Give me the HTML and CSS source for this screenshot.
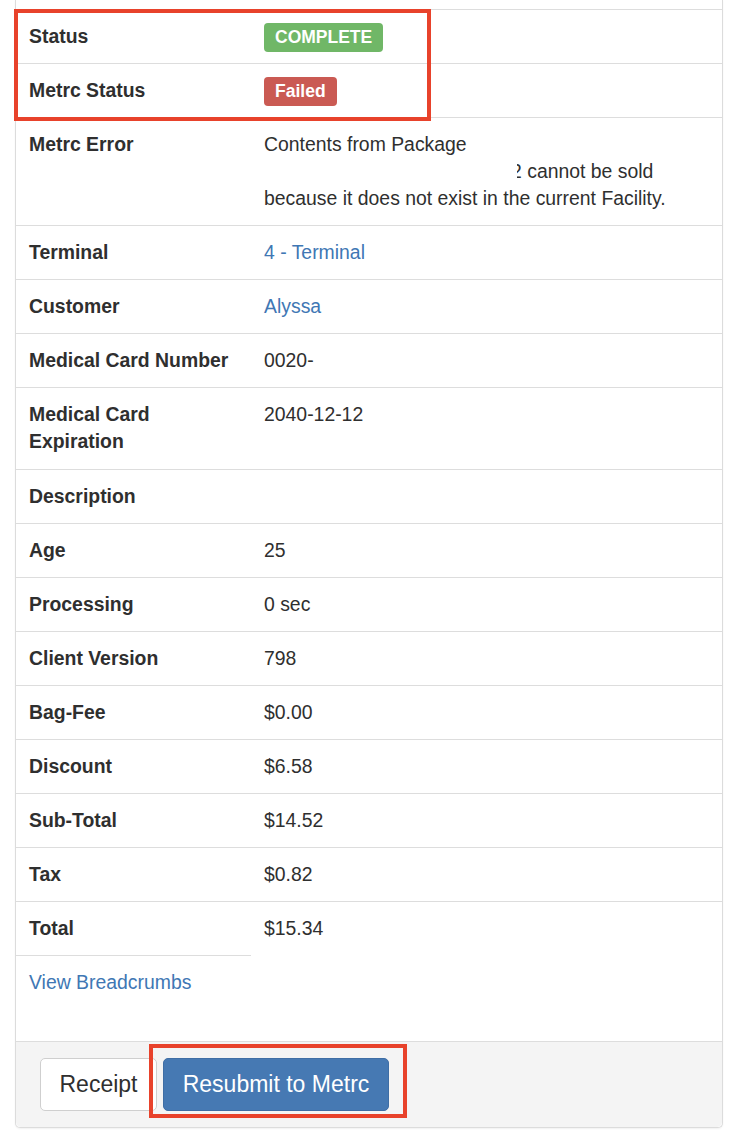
FILE: index.html
```html
<!DOCTYPE html>
<html lang="en">
<head>
<meta charset="utf-8">
<title>Transaction</title>
<link rel="stylesheet" href="styles.css">
</head>
<body>
<div class="panel">
  <div class="panel-body">
    <table class="details">
      <tbody>
        <tr><th>Status</th><td><span class="label label-success">COMPLETE</span></td></tr>
        <tr><th>Metrc Status</th><td><span class="label label-danger">Failed</span></td></tr>
        <tr><th>Metrc Error</th><td>Contents from Package<br><span class="pkg-tail">2</span> cannot be sold<br>because it does not exist in the current Facility.</td></tr>
        <tr><th>Terminal</th><td><a href="#">4 - Terminal</a></td></tr>
        <tr><th>Customer</th><td><a href="#">Alyssa</a></td></tr>
        <tr><th>Medical Card Number</th><td>0020-</td></tr>
        <tr class="wrapped"><th>Medical Card Expiration</th><td>2040-12-12</td></tr>
        <tr><th>Description</th><td></td></tr>
        <tr><th>Age</th><td>25</td></tr>
        <tr><th>Processing</th><td>0 sec</td></tr>
        <tr><th>Client Version</th><td>798</td></tr>
        <tr><th>Bag-Fee</th><td>$0.00</td></tr>
        <tr><th>Discount</th><td>$6.58</td></tr>
        <tr><th>Sub-Total</th><td>$14.52</td></tr>
        <tr><th>Tax</th><td>$0.82</td></tr>
        <tr class="last"><th>Total</th><td>$15.34</td></tr>
      </tbody>
    </table>
    <p class="crumbs"><a href="#">View Breadcrumbs</a></p>
  </div>
  <div class="panel-footer">
    <button class="btn btn-default" type="button">Receipt</button>
    <button class="btn btn-primary" type="button">Resubmit to Metrc</button>
  </div>
</div>

<div class="callout callout-status"></div>
<div class="callout callout-resubmit"></div>
</body>
</html>
```

FILE: styles.css
```css
html, body {
  margin: 0;
  padding: 0;
  background: #fff;
}

body {
  position: relative;
  width: 736px;
  height: 1144px;
  overflow: hidden;
  font-family: "Liberation Sans", Arial, sans-serif;
  font-size: 19.4px;
  line-height: 27px;
  color: #2f2f2f;
}

a {
  color: #4077b4;
  text-decoration: none;
}

/* panel (page is scrolled, so its top edge is off screen) */
.panel {
  margin-left: 15px;
  width: 708px;
  box-sizing: border-box;
  border: 1px solid #dcdcdc;
  border-top: 0;
  border-radius: 0 0 5px 5px;
  box-shadow: 0 1px 2px rgba(0, 0, 0, 0.06);
  background: #fff;
}

.panel-body {
  padding-top: 9px;
}

.details {
  width: 100%;
  border-collapse: collapse;
  border-spacing: 0;
}

.details th,
.details td {
  border-top: 1px solid #dddddd;
  padding: 13px 14px 13px 13px;
  text-align: left;
  vertical-align: top;
}

.details th {
  width: 208px;
  font-weight: bold;
  color: #2f2f2f;
}

.details td {
  padding-left: 13px;
}

.details .wrapped th,
.details .wrapped td {
  padding-bottom: 14px;
}

.details .last th {
  border-bottom: 1px solid #dddddd;
}

.label {
  display: inline-block;
  vertical-align: top;
  height: 29px;
  line-height: 29px;
  margin-bottom: -2px;
  padding: 0 11px;
  border-radius: 4px;
  font-size: 17.5px;
  font-weight: bold;
  color: #fff;
}

.label-success { background: #70b767; }
.label-danger  { background: #ca5a53; }

/* package tag blanked out, only the tail of its last digit shows */
.pkg-tail {
  position: relative;
  display: inline-block;
  margin-left: 247px;
}

.pkg-tail::before {
  content: "";
  position: absolute;
  left: -247px;
  top: 0;
  width: 253px;
  height: 100%;
  background: #fff;
}

.crumbs {
  margin: 13px 0 45px 13px;
}

.panel-footer {
  display: flex;
  gap: 6px;
  padding: 16px 24px;
  background: #f4f4f4;
  border-top: 1px solid #dddddd;
  border-radius: 0 0 5px 5px;
}

.btn {
  height: 53px;
  box-sizing: border-box;
  padding: 12px 0;
  border: 1px solid transparent;
  border-radius: 5px;
  font-family: "Liberation Sans", Arial, sans-serif;
  font-size: 23px;
  line-height: 27px;
  white-space: nowrap;
  text-align: center;
  cursor: pointer;
}

.btn-default {
  width: 117px;
  background: #fff;
  border-color: #cfcfcf;
  color: #2f2f2f;
}

.btn-primary {
  width: 226px;
  background: #4679b3;
  border-color: #3f6ea5;
  color: #fff;
}

/* red highlight frames drawn over the panel */
.callout {
  position: absolute;
  box-sizing: border-box;
  border: 4px solid #e8422b;
}

.callout-status {
  left: 14px;
  top: 9px;
  width: 417px;
  height: 112px;
}

.callout-resubmit {
  left: 149px;
  top: 1044px;
  width: 258px;
  height: 74px;
}
```
